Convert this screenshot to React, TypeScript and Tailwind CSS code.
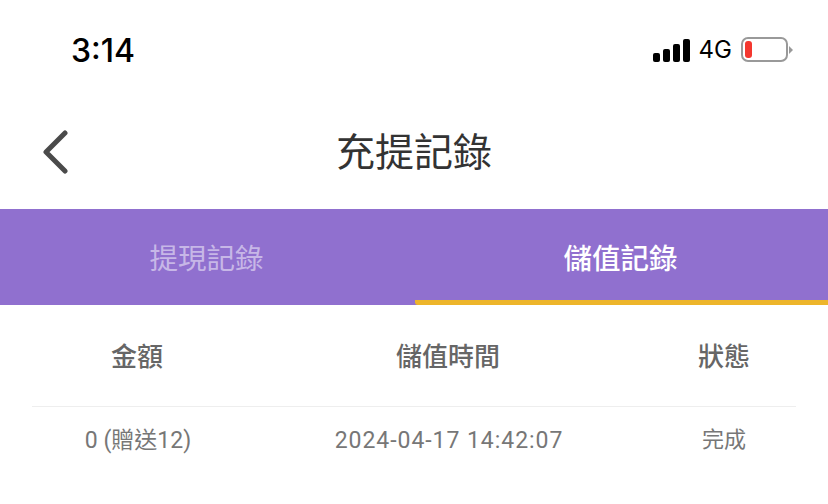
import React from 'react';

const CJK = '"Liberation Sans", "Noto Sans CJK TC", sans-serif';

const App: React.FC = () => {
  return (
    <div className="w-[828px] h-[504px] bg-white overflow-hidden" style={{ fontFamily: CJK }}>
      <div className="h-[100px] flex items-start justify-between pl-[71px] pr-[35px] pt-[31px]">
        <span className="text-[32px] leading-[40px] font-medium text-black" style={{ fontFamily: 'Inter, sans-serif' }}>3:14</span>
        <div className="flex items-center gap-[9px] mt-[6px]">
          <div className="flex items-end gap-[3px] h-[24px]">
            <div className="w-[7px] h-[9px] bg-black rounded-[2px]" />
            <div className="w-[7px] h-[13px] bg-black rounded-[2px]" />
            <div className="w-[7px] h-[18px] bg-black rounded-[2px]" />
            <div className="w-[7px] h-[23px] bg-black rounded-[2px]" />
          </div>
          <span className="text-[24px] leading-[24px] text-black" style={{ fontFamily: 'Inter, sans-serif' }}>4G</span>
          <div className="flex items-center gap-[1px]">
            <div className="w-[47px] h-[25px] border-2 border-[#999999] rounded-[7px] p-[2px]">
              <div className="w-[7px] h-full bg-[#f4372f] rounded-[3px]" />
            </div>
            <div className="w-0 h-0 border-y-[4px] border-y-transparent border-l-[4px] border-l-[#999999]" />
          </div>
        </div>
      </div>
      <div className="h-[109px] relative flex items-center justify-center">
        <svg className="absolute left-[40px] top-[30px]" width="30" height="44" viewBox="0 0 30 44" fill="none">
          <path d="M25 3 L6 22 L25 41" stroke="#4a4a4a" strokeWidth="5" strokeLinecap="round" strokeLinejoin="round" />
        </svg>
        <span className="text-[39px] leading-[50px] text-[#333] mt-[-4px]">充提記錄</span>
      </div>
      <div className="h-[96px] bg-[#9070cf] flex">
        <div className="w-[415px] flex items-center justify-center pt-[4px] pr-[2px] text-[28.5px] text-white/50">提現記錄</div>
        <div className="flex-1 flex items-center justify-center pt-[9px] pr-[2px] text-[28.5px] font-medium text-white border-b-[5px] border-[#edb52b] rounded-bl-[3px]">儲值記錄</div>
      </div>
      <div className="mx-[32px] h-[102px] border-b border-[#eeeeee] flex items-center pt-[4px] text-[26px] font-medium text-[#666]">
        <div className="w-[210px] text-center">金額</div>
        <div className="flex-1 pl-[2px] text-center">儲值時間</div>
        <div className="w-[144px] text-center">狀態</div>
      </div>
      <div className="mx-[32px] h-[65px] flex items-center text-[23px] text-[#777]" style={{ fontFamily: '"Roboto", "Noto Sans CJK TC", sans-serif' }}>
        <div className="w-[210px] pl-[2px] pt-[3px] text-center">0 (贈送12)</div>
        <div className="flex-1 pl-[4px] pt-[3px] text-center tracking-[0.95px]">2024-04-17 14:42:07</div>
        <div className="w-[144px] text-center text-[22px]">完成</div>
      </div>
    </div>
  );
};

export default App;
